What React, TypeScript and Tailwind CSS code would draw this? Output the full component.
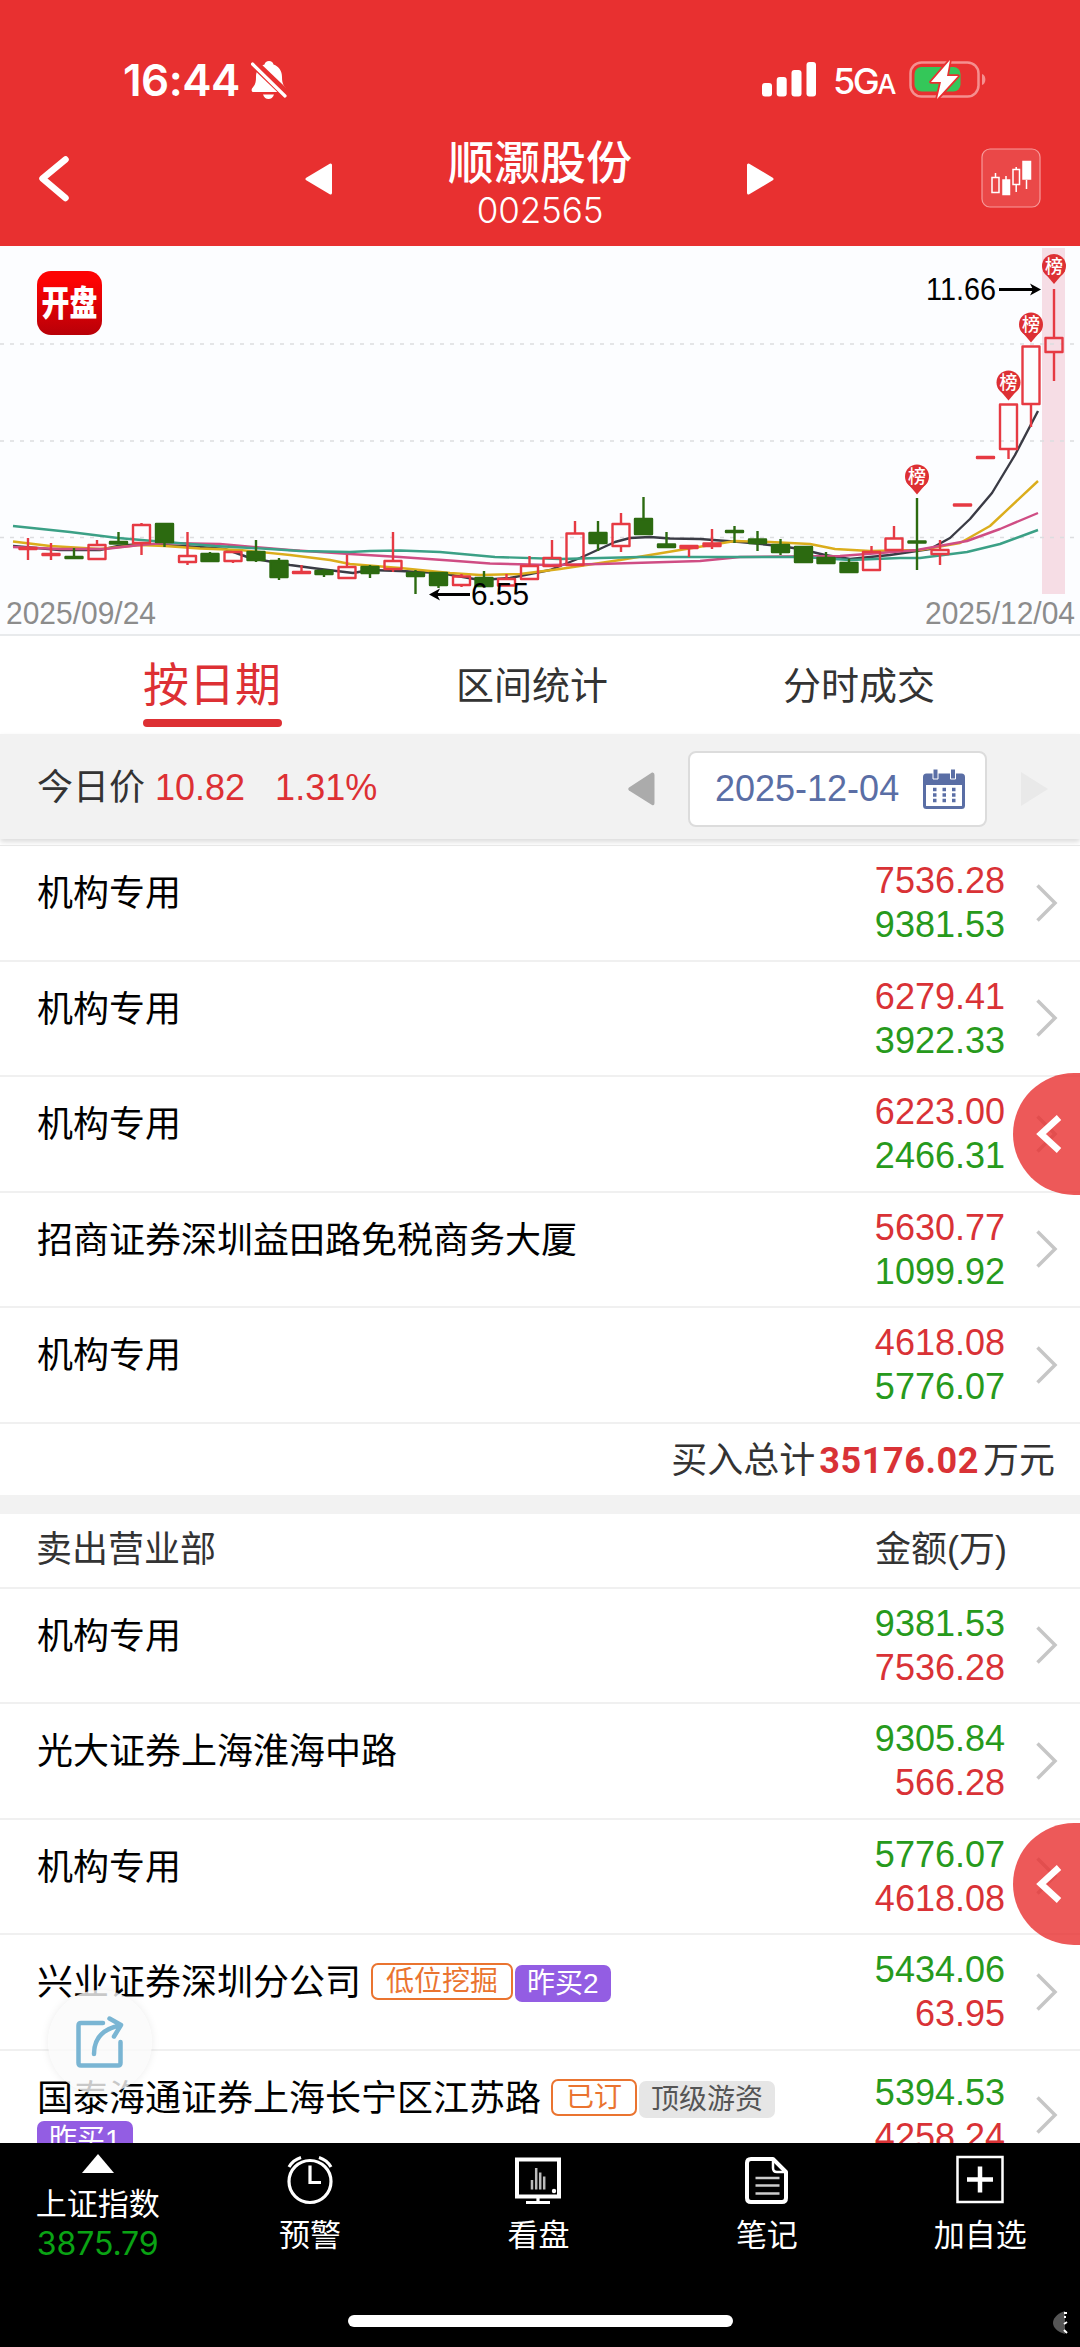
import type { ReactNode } from "react"

const MARKS = [
  { x: 917, y: 476.5 },
  { x: 1008.5, y: 382.5 },
  { x: 1031, y: 324.5 },
  { x: 1054, y: 266 },
]

type Kind = "up" | "down" | "flat"

// x, kind, body top, body bottom, high, low
const CANDLES: [number, Kind, number, number, number, number][] = [
  [28, "flat", 548, 549, 538, 560],
  [51, "flat", 554, 555, 543, 560],
  [74, "down", 557, 558, 548, 558],
  [97, "up", 545, 559, 540, 559],
  [118.5, "down", 542, 543.5, 532, 543],
  [141.5, "up", 525, 543, 523, 555],
  [164.5, "down", 524, 542, 524, 547],
  [187.5, "up", 556, 562, 532, 565],
  [210, "down", 554, 561, 552, 561],
  [233, "up", 552, 561, 552, 563],
  [256, "down", 552, 560, 540, 562],
  [279, "down", 561, 577, 558, 580],
  [301.5, "flat", 572, 573, 565, 573],
  [324, "down", 571, 574, 569, 577],
  [347, "up", 567, 578, 555, 578],
  [370, "down", 567, 573, 565, 578],
  [393, "up", 561, 569, 532, 572],
  [415.5, "down", 573, 576, 570, 594],
  [438.5, "down", 573, 585, 572, 588],
  [461.5, "up", 576.5, 585, 574, 587],
  [484, "down", 578, 586, 571, 586],
  [506.5, "up", 579, 585.5, 574, 586],
  [529.5, "up", 566, 579, 556, 579],
  [552, "up", 558, 566, 540, 566],
  [575, "up", 533.5, 565, 521, 565],
  [598, "down", 533, 543, 521, 551],
  [621, "up", 524, 546, 513, 552],
  [643.5, "down", 519, 534, 497, 535],
  [666.5, "down", 544.5, 547, 532, 547],
  [689, "flat", 546, 548, 546, 557],
  [712, "flat", 543.5, 546, 529, 549],
  [734.5, "down", 531, 532, 526, 543],
  [757.5, "down", 539.5, 543, 531, 551],
  [780.5, "down", 545, 552, 539, 555],
  [803.5, "down", 547, 562, 547, 562],
  [826, "down", 558, 563, 552, 563],
  [849, "down", 563, 572, 559, 573],
  [871.5, "up", 552, 570, 546, 570],
  [894, "up", 538.5, 550, 526, 550],
  [917, "down", 541.5, 542.5, 498, 570],
  [940, "up", 550, 554, 540, 565],
  [962.5, "flat", 504.5, 505.5, 505, 505],
  [985.5, "flat", 457, 458, 457, 457],
  [1008.5, "up", 404.5, 449, 404, 459],
  [1031, "up", 346.5, 404, 346, 427],
  [1054, "up", 338, 352, 289, 381],
]

const LINES = [
  { color: "#3a3b45", points: "13,546 60,550 100,550 118,546 140,544 200,547 225,549 250,558 290,565 320,569 353,573 370,570 400,571 440,573 480,580 510,578 550,570 580,558 615,542 630,538 650,537 670,538.5 700,539 740,542 780,546 800,549 825,555 850,559 890,555 930,549 950,538 970,519 992,493 1015,455 1038,411" },
  { color: "#dbad1c", points: "13,541.5 50,546 100,549 140,545 165,546 200,548.5 240,550 290,555 330,560 350,564 400,568 450,573 480,575 520,574 560,569 620,560 680,550 735,541 770,542 810,544 835,549 870,551 920,550 960,543 990,526 1038,481" },
  { color: "#cf4d84", points: "13,547 60,549 105,549 140,545 165,543 220,544 290,550 350,554 400,557 450,560.5 490,563.5 550,565 600,564 700,561 740,557 840,556 880,553 917,550 967,541 1000,529 1038,513" },
  { color: "#3ba086", points: "13,526 70,532 118,538 165,542 215,546 270,549 300,551 350,552 370,551 400,550.5 440,552 495,557 560,559 640,557 740,557 803,557 850,560 900,558 920,558 967,552 1000,544 1038,530" },
]

function KLine() {
  return (
    <svg viewBox="0 246 1080 388" className="block h-[388px] w-full">
      <rect x="1042" y="248" width="23" height="346" fill="#f6dde5" />
      {[344, 441, 537.5].map((y) => (
        <line key={y} x1="0" x2="1080" y1={y} y2={y} stroke="#dcdde0" strokeWidth="1.5" strokeDasharray="4 6" />
      ))}
      {LINES.map((l) => (
        <polyline key={l.color} points={l.points} fill="none" stroke={l.color} strokeWidth="2.4" strokeLinejoin="round" />
      ))}
      {CANDLES.map(([x, kind, top, bottom, high, low]) => {
        const color = kind === "down" ? "#2c6a10" : "#e63a43"
        return (
          <g key={x} stroke={color} strokeWidth="2.4" strokeLinejoin="round">
            {kind === "up" ? (
              <path d={`M${x} ${high}V${top}M${x} ${bottom}V${low}`} />
            ) : (
              <path d={`M${x} ${high}V${low}`} />
            )}
            <rect x={x - 8.5} y={top} width="17" height={bottom - top} fill={kind === "up" ? "none" : color} />
          </g>
        )
      })}
      {MARKS.map(({ x, y }) => (
        <g key={x}>
          <path d={`M${x - 11} ${y + 5}L${x} ${y + 18}L${x + 11} ${y + 5}Z`} fill="#dd3034" />
          <circle cx={x} cy={y} r="12" fill="#dd3034" />
          <text x={x} y={y + 6.5} textAnchor="middle" fontSize="18" fill="#fff" fontWeight="500">榜</text>
        </g>
      ))}
      <g fontSize="31">
        <text x="926" y="300" textLength="70" lengthAdjust="spacingAndGlyphs" fill="#000">11.66</text>
        <text x="471" y="605" textLength="58" lengthAdjust="spacingAndGlyphs" fill="#000">6.55</text>
        <text x="6" y="624" textLength="150" lengthAdjust="spacingAndGlyphs" fill="#8c8c8c">2025/09/24</text>
        <text x="925" y="624" textLength="150" lengthAdjust="spacingAndGlyphs" fill="#8c8c8c">2025/12/04</text>
      </g>
      <g stroke="#000" strokeWidth="3" fill="none">
        <path d="M999 289.5H1036M470 594.5H434" />
      </g>
      <path d="M1041 289.5L1030 283.5L1033 289.5L1030 295.5ZM429 594.5L440 588.5L437 594.5L440 600.5Z" />
      <defs>
        <linearGradient id="logo" x1="0" y1="0" x2="0" y2="1">
          <stop offset="0.15" stopColor="#fd0303" />
          <stop offset="1" stopColor="#b80008" />
        </linearGradient>
      </defs>
      <rect x="37" y="271" width="65" height="64" rx="14" fill="url(#logo)" />
      <g transform="translate(69.5 315.500) scale(0.9 1.15)">
        <text textAnchor="middle" fontSize="31" fontWeight="900" fill="#fff">开盘</text>
      </g>
    </svg>
  )
}

interface Seat {
  name: string
  top: string
  bottom: string
  tags?: { label: string; style: keyof typeof tagStyles }[]
}

const tagStyles = {
  orange: "border-2 border-[#ea7430] text-[#ea7430] px-[13px] leading-[33px]",
  purple: "bg-[#935de3] text-white px-3 leading-[37px] mt-0.5",
  gray: "bg-[#e6e6e6] text-[#555] px-3 leading-[37px] mt-0.5",
}

const buySeats: Seat[] = [
  { name: "机构专用", top: "7536.28", bottom: "9381.53" },
  { name: "机构专用", top: "6279.41", bottom: "3922.33" },
  { name: "机构专用", top: "6223.00", bottom: "2466.31" },
  { name: "招商证券深圳益田路免税商务大厦", top: "5630.77", bottom: "1099.92" },
  { name: "机构专用", top: "4618.08", bottom: "5776.07" },
]

const sellSeats: Seat[] = [
  { name: "机构专用", top: "9381.53", bottom: "7536.28" },
  { name: "光大证券上海淮海中路", top: "9305.84", bottom: "566.28" },
  { name: "机构专用", top: "5776.07", bottom: "4618.08" },
  {
    name: "兴业证券深圳分公司",
    top: "5434.06",
    bottom: "63.95",
    tags: [
      { label: "低位挖掘", style: "orange" },
      { label: "昨买2", style: "purple" },
    ],
  },
  {
    name: "国泰海通证券上海长宁区江苏路",
    top: "5394.53",
    bottom: "4258.24",
    tags: [
      { label: "已订", style: "orange" },
      { label: "顶级游资", style: "gray" },
      { label: "昨买1", style: "purple" },
    ],
  },
]

function SeatRow({ seat, sell = false }: { seat: Seat; sell?: boolean }) {
  const red = "text-[#d93236]"
  const green = "text-[#279a1c]"
  return (
    <div className={`flex shrink-0 items-center border-b-2 border-[#f0f0f0] pl-[37px] pr-[22px] ${seat.tags?.length === 3 ? "h-[130px]" : "h-[115.5px]"}`}>
      <div className="flex flex-1 flex-wrap content-start self-stretch pt-[28px] text-[36px] leading-[40px] text-black">
        <span className={seat.tags ? "mr-[10px]" : ""}>{seat.name}</span>
        {seat.tags?.map((tag) => (
          <span key={tag.label} className={`mr-[2px] h-[37px] rounded-[7px] text-[28px] ${tagStyles[tag.style]}`}>
            {tag.label}
          </span>
        ))}
      </div>
      <div className="w-[180px] pt-px text-right text-[36px] leading-[44px]">
        <p className={sell ? green : red}>{seat.top}</p>
        <p className={sell ? red : green}>{seat.bottom}</p>
      </div>
      <svg viewBox="0 0 22 38" className="ml-[31px] h-[38px] w-[22px]" fill="none" stroke="#c6c6c6" strokeWidth="3.5">
        <path d="M1.5 1.5L19 19L1.5 36.5" />
      </svg>
    </div>
  )
}

function Drawer({ className }: { className: string }) {
  return (
    <button className={`absolute right-0 flex h-[122px] w-[67px] items-center rounded-l-[61px] bg-[#e83030]/80 pl-[23px] ${className}`}>
      <svg viewBox="0 0 26 38" className="h-[38px] w-[26px]" fill="none" stroke="#fff" strokeWidth="6.5">
        <path d="M23 2.5L5 19L23 35.5" />
      </svg>
    </button>
  )
}

function NavItem({ label, className, children }: { label: string; className: string; children: ReactNode }) {
  return (
    <div className={`flex flex-col items-center pt-3 ${className}`}>
      <svg viewBox="0 0 48 50" className="h-[50px] w-12" fill="none" stroke="#fff" strokeWidth="3.2">
        {children}
      </svg>
      <span className="mt-[11px] text-[31px] leading-[40px]">{label}</span>
    </div>
  )
}

export default function App() {
  return (
    <div className="relative flex h-[2347px] w-[1080px] flex-col overflow-hidden bg-white font-['Liberation_Sans','Noto_Sans_CJK_SC',sans-serif] text-[#333]">
      <header className="h-[246px] shrink-0 bg-[#e83030] text-white">
        {/* Status bar */}
        <div className="flex h-[130px] items-start pl-[123px] pr-[93px] pt-[60px]">
          <span className="w-[120px] font-['Inter'] text-[44px] font-semibold leading-[40px] tracking-[-0.5px]">16:44</span>
          <svg viewBox="0 0 36 40" className="ml-2 h-10 w-9">
            <path d="M18 1C20.500 1 22 2.500 22.500 4.500C28 6.500 31 11 31 17C31 24 33 26 35 28.500C36 31 35 32 33 32H3C1 32 0 31 1 28.500C4 25 5 23 5 17C5 11 8 6.500 13.500 4.500C14 2.500 15.500 1 18 1Z" fill="#fff" />
            <path d="M12 34.500H23C22 37.500 20 39 17.500 39C15 39 13 37.500 12 34.500Z" fill="#fff" />
            <path d="M1 1.500L36 35" stroke="#e83030" strokeWidth="9" />
            <path d="M1.500 4L34 36" stroke="#fff" strokeWidth="3.200" strokeLinecap="round" />
          </svg>
          <svg viewBox="0 0 55 36" className="ml-auto mt-0.5 h-9 w-[55px]" fill="#fff">
            <rect x="0" y="21" width="10" height="13.500" rx="3" />
            <rect x="14.700" y="15" width="10" height="19.500" rx="3" />
            <rect x="29.500" y="8" width="10" height="26.500" rx="3" />
            <rect x="44.500" y="0" width="9.500" height="34.500" rx="3" />
          </svg>
          <span className="ml-[16px] w-[62px] whitespace-nowrap font-['Inter'] text-[36px] font-medium leading-[43px] tracking-[-2.500px]">
            5G<span className="text-[27px]">A</span>
          </span>
          <svg viewBox="0 0 78 40" className="ml-[14px] h-10 w-[78px]">
            <rect x="1.500" y="2.500" width="68" height="34" rx="11" fill="none" stroke="#f58f8f" strokeWidth="2.500" />
            <path d="M73 14C77.500 15 77.500 24 73 25Z" fill="#f58f8f" />
            <rect x="5.500" y="7" width="46" height="24.500" rx="7" fill="#34c759" />
            <path d="M41 0L22 22H32L28 39L49 16H38Z" fill="#fff" stroke="#e83030" strokeWidth="3.500" strokeLinejoin="round" paintOrder="stroke" />
          </svg>
        </div>
        {/* Title bar */}
        <div className="relative flex h-[116px] items-start justify-center pt-2">
          <svg viewBox="0 0 32 48" className="absolute left-[38px] top-[25px] h-12 w-8" fill="none" stroke="#fff" strokeWidth="6.500" strokeLinecap="round" strokeLinejoin="round">
            <path d="M27.500 4.500L4.500 23.500L27.500 43" />
          </svg>
          <svg viewBox="0 0 28 32" className="absolute left-[305px] top-[33px] h-8 w-7" fill="#fff" stroke="#fff" strokeWidth="3" strokeLinejoin="round">
            <path d="M2 16L25.500 2V30Z" />
          </svg>
          <div className="flex flex-col items-center">
            <h1 className="text-[46px] font-medium leading-[50px]">顺灏股份</h1>
            <p className="mt-[1px] font-['Inter'] text-[35px] font-light leading-[42px] tracking-[-0.100px]">002565</p>
          </div>
          <svg viewBox="0 0 28 32" className="absolute left-[746px] top-[33px] h-8 w-7" fill="#fff" stroke="#fff" strokeWidth="3" strokeLinejoin="round">
            <path d="M26 16L2.500 2V30Z" />
          </svg>
          <svg viewBox="0 0 60 60" className="absolute left-[981px] top-[18px] size-[60px]" fill="none" stroke="#fff" strokeWidth="1.500">
            <rect x="1" y="1" width="58" height="58" rx="8" fill="#ea4848" stroke="#f79999" strokeWidth="1.200" />
            <path d="M11 29.500H18V44.500H11ZM14.500 25V29.500M32 21.500H38.500V36.500H32ZM35.200 19V21.500M35.200 36.500V44M25 28V32M45.500 32V41" />
            <path d="M22 32H28.500V46.500H22ZM42 13.500H49.500V31H42Z" fill="#fff" />
          </svg>
        </div>
      </header>

      <section className="shrink-0 border-b-2 border-[#e8eaec] bg-[#fcfdff]">
        <KLine />
      </section>

      <nav className="flex h-[98px] shrink-0 items-start pl-[143px] text-[38px] leading-[70px]">
        <div className="w-[139px] pt-[16px] text-[46px] leading-[66px] text-[#dd3034]">
          按日期
          <div className="mt-px h-2 rounded-full bg-[#dd3034]" />
        </div>
        <span className="ml-[174px] mt-[15px]">区间统计</span>
        <span className="ml-[175px] mt-[15px]">分时成交</span>
      </nav>

      <div className="flex h-[105px] shrink-0 items-center bg-[#f2f2f2] pl-[37px] pr-[32px] text-[36px] shadow-[0_3px_5px_#ddd]">
        <span className="pt-[3px]">今日价</span>
        <span className="ml-[10px] pt-0.5 text-[#dd3034]">10.82</span>
        <span className="ml-[30px] pt-0.5 text-[#dd3034]">1.31%</span>
        <svg viewBox="0 0 27 34" className="ml-auto mt-1 h-[34px] w-[27px]" fill="#ababab">
          <path d="M1 15.500L24 0.500Q26.500 0 26.500 3V31Q26.500 34 24 33L1 18.500Q-0.500 17 1 15.500Z" />
        </svg>
        <div className="ml-[33px] mt-1 flex h-[76px] w-[299px] items-center rounded-lg border-2 border-[#dcdcdc] bg-white pl-[25px] text-[#5a6ea5]">
          <span className="w-[186px] whitespace-nowrap">2025-12-04</span>
          <svg viewBox="0 0 42 40" className="ml-[22px] h-10 w-[42px]">
            <rect x="1.500" y="6" width="39" height="32.500" rx="2" fill="#fff" stroke="#5a6ea5" strokeWidth="3" />
            <path d="M1 6H41V16H1Z" fill="#5a6ea5" />
            <path d="M10 0H15V10H10ZM27.500 0H32.500V10H27.500Z" fill="#5a6ea5" stroke="#fff" strokeWidth="1" />
            {[20.5, 26, 31.5].map((y) => (
              <path key={y} d={`M10 ${y}H13.500M19.500 ${y}H23M29 ${y}H32.500`} stroke="#5a6ea5" strokeWidth="3.500" />
            ))}
          </svg>
        </div>
        <svg viewBox="0 0 27 34" className="ml-[34px] mt-1 h-[34px] w-[27px]" fill="#e9e9e9">
          <path d="M0 0L27 17L0 34Z" />
        </svg>
      </div>

      <main className="flex min-h-0 flex-1 flex-col overflow-hidden">
        <div className="h-[7px] shrink-0 border-b border-[#e8e8e8]" />
        {buySeats.map((seat, i) => (
          <SeatRow key={i} seat={seat} />
        ))}
        <div className="flex h-[71px] shrink-0 items-center justify-end pt-[3px] pr-[25px] text-[36px]">
          买入总计
          <span className="mx-[4px] font-['Roboto'] text-[36px] font-bold tracking-[0.600px] text-[#d93236]">35176.02</span>
          万元
        </div>
        <div className="h-[19px] shrink-0 bg-[#f2f2f2]" />
        <div className="flex h-[75px] shrink-0 items-center justify-between border-b-2 border-[#f0f0f0] pl-[36px] pr-[73px] text-[36px]">
          <span>卖出营业部</span>
          <span>金额(万)</span>
        </div>
        {sellSeats.map((seat, i) => (
          <SeatRow key={i} seat={seat} sell />
        ))}
      </main>

      <footer className="relative flex h-[204px] shrink-0 bg-black text-white">
        <div className="flex w-[196px] flex-col items-center pt-[11px]">
          <svg viewBox="0 0 32 19" className="h-[19px] w-8" fill="#fff">
            <path d="M16 0L32 19H0Z" />
          </svg>
          <span className="mt-[12px] text-[31px] leading-[40px]">上证指数</span>
          <span className="font-['Inter'] text-[32px] leading-[38px] tracking-[-0.100px] text-[#0aa314]">3875.79</span>
        </div>
        <NavItem label="预警" className="ml-[15px] w-[200px]">
          <circle cx="24" cy="26.500" r="21" />
          <path d="M24 10.500V27.500H35M3 12Q7 5 15 2.500M45 12Q41 5 33 2.500" />
        </NavItem>
        <NavItem label="看盘" className="ml-[29px] w-[200px]">
          <path d="M3 4.500H45V41.500H3Z" strokeWidth="4" />
          <path d="M1.500 41.500H46.500M24 42V47M12 47.500H36" />
          <path d="M18 25V34.500M22.200 13V34.500M26.200 17.500V34.500M30.200 21.500V34.500" stroke="#bbb" strokeWidth="2.500" />
          <circle cx="40" cy="36" r="2.200" fill="#fff" stroke="none" />
        </NavItem>
        <NavItem label="笔记" className="ml-[29px] w-[200px]">
          <path d="M8 4H30L43 17V43Q43 47 39 47H8Q4 47 4 43V8Q4 4 8 4Z" strokeWidth="4" strokeLinejoin="round" />
          <path d="M30 4V13Q30 17 34 17H43" strokeWidth="2.500" />
          <path d="M12.500 23H36.500M12.500 30.500H36.500M12.500 38.500H36.500" stroke="#ccc" strokeWidth="2.500" />
        </NavItem>
        <NavItem label="加自选" className="ml-[14px] w-[200px]">
          <path d="M1.500 2H46.500V47H1.500Z" strokeWidth="2.500" />
          <path d="M11 24.500H37M24 11.500V37.500" strokeWidth="4.500" />
        </NavItem>
        <div className="absolute bottom-5 left-[348px] h-3 w-[385px] rounded-full bg-white" />
        <svg viewBox="0 0 16 24" className="absolute bottom-[12px] right-[11px] h-6 w-4">
          <path d="M12 0C3 3 0 8 0 12C0 16 4 21 12 23Z" fill="#555" />
          <path d="M11 2H14M11 6H13M11 13L14 11M11 19L14 22" stroke="#fff" strokeWidth="2" />
        </svg>
      </footer>

      {/* Floating controls */}
      <Drawer className="top-[1073px]" />
      <Drawer className="top-[1823px]" />
      <button className="absolute left-12 top-[1990px] flex size-[104px] items-center justify-center rounded-full bg-[#fafafa]/80 shadow-[0_0_8px_rgba(0,0,0,0.08)]">
        <svg viewBox="0 0 50 54" className="h-[54px] w-[50px]" fill="none" stroke="#7ab5d3" strokeWidth="4.500" strokeLinecap="round" strokeLinejoin="round">
          <path d="M28 8H6Q3.500 8 3.500 10.500V48Q3.500 50.500 6 50.500H43Q45.500 50.500 45.500 48V27" />
          <path d="M19 39C19 24 27 14 45 10.500M34.500 3.500L46 10L39 21.500" />
        </svg>
      </button>
    </div>
  )
}
